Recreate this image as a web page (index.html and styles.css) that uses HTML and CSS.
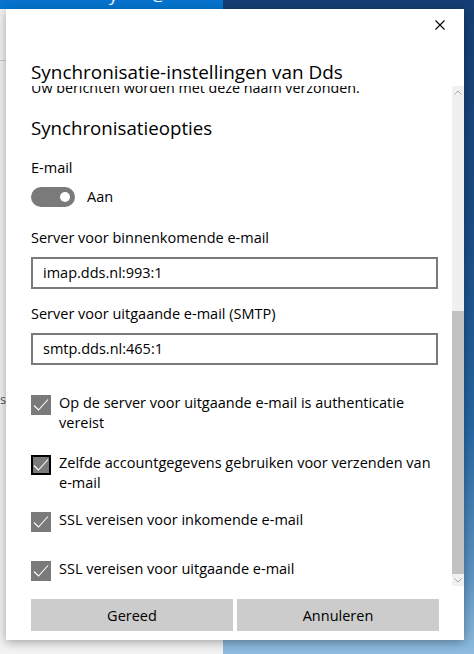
FILE: index.html
```html
<!DOCTYPE html>
<html lang="nl">
<head>
<meta charset="utf-8">
<title>Synchronisatie-instellingen</title>
<link rel="stylesheet" href="styles.css">
</head>
<body>
<div class="bg">
  <div class="bg-left">
    <div class="bg-bar"><span class="bar-text">y</span><span class="bar-text at">@</span></div>
    <div class="bg-app">
      <div class="app-line"></div>
      <span class="app-s">s</span>
    </div>
  </div>
  <div class="bg-right"></div>
</div>

<div class="dialog">
  <header class="dlg-head">
    <button class="close" aria-label="Sluiten">
      <svg width="10" height="10" viewBox="0 0 10 10"><path d="M0.5 0.5 L9.5 9.5 M9.5 0.5 L0.5 9.5" stroke="#000" stroke-width="1.1" fill="none"/></svg>
    </button>
    <h1 class="title">Synchronisatie-instellingen van Dds</h1>
  </header>

  <div class="scroll">
    <div class="viewport">
      <div class="content">
        <p class="subtitle">Uw berichten worden met deze naam verzonden.</p>
        <h2 class="heading">Synchronisatieopties</h2>
        <div class="label email-label">E-mail</div>
        <div class="toggle-row">
          <span class="toggle"><span class="knob"></span></span>
          <span class="toggle-text">Aan</span>
        </div>
        <div class="label field-label first">Server voor binnenkomende e-mail</div>
        <div class="input">imap.dds.nl:993:1</div>
        <div class="label field-label second">Server voor uitgaande e-mail (SMTP)</div>
        <div class="input">smtp.dds.nl:465:1</div>

        <div class="check c1">
          <span class="box"><svg width="20" height="20" viewBox="0 0 20 20"><path d="M3 10.5 L7.5 15 L17 4.5" stroke="#fff" stroke-width="1.1" fill="none"/></svg></span>
          <span class="check-text">Op de server voor uitgaande e-mail is authenticatie vereist</span>
        </div>
        <div class="check c2">
          <span class="box focus"><svg width="16" height="16" viewBox="2 2 16 16"><path d="M3 10.5 L7.5 15 L17 4.5" stroke="#fff" stroke-width="1.1" fill="none"/></svg></span>
          <span class="check-text">Zelfde accountgegevens gebruiken voor verzenden van e-mail</span>
        </div>
        <div class="check c3">
          <span class="box"><svg width="20" height="20" viewBox="0 0 20 20"><path d="M3 10.5 L7.5 15 L17 4.5" stroke="#fff" stroke-width="1.1" fill="none"/></svg></span>
          <span class="check-text">SSL vereisen voor inkomende e-mail</span>
        </div>
        <div class="check c4">
          <span class="box"><svg width="20" height="20" viewBox="0 0 20 20"><path d="M3 10.5 L7.5 15 L17 4.5" stroke="#fff" stroke-width="1.1" fill="none"/></svg></span>
          <span class="check-text">SSL vereisen voor uitgaande e-mail</span>
        </div>
      </div>
    </div>
    <div class="scrollbar">
      <span class="arrow">
        <svg width="8" height="5" viewBox="0 0 8 5"><path d="M0.5 4.5 L4 1 L7.5 4.5" stroke="#a6a6a6" stroke-width="1" fill="none"/></svg>
      </span>
      <div class="track"><div class="thumb"></div></div>
      <span class="arrow">
        <svg width="8" height="5" viewBox="0 0 8 5"><path d="M0.5 0.5 L4 4 L7.5 0.5" stroke="#a6a6a6" stroke-width="1" fill="none"/></svg>
      </span>
    </div>
  </div>

  <div class="buttons">
    <button class="btn">Gereed</button>
    <button class="btn">Annuleren</button>
  </div>
</div>
</body>
</html>
```

FILE: styles.css
```css
* { box-sizing: border-box; }

html, body {
  margin: 0;
  padding: 0;
  width: 474px;
  height: 654px;
  overflow: hidden;
  font-family: "Open Sans", "Noto Sans", "Liberation Sans", sans-serif;
  color: #000;
}

.bg {
  display: grid;
  grid-template-columns: 223px 1fr;
  height: 654px;
}

.bg-left {
  display: flex;
  flex-direction: column;
}

.bg-bar {
  height: 9px;
  background: linear-gradient(#0a72cc, #0078d4);
  overflow: hidden;
  position: relative;
}

.bar-text {
  position: absolute;
  left: 109px;
  top: -17px;
  font-size: 17px;
  line-height: 23px;
  color: #fff;
}

.bar-text.at {
  left: 151px;
}

.bg-app {
  flex: 1;
  background: #f3f3f3;
  display: flex;
  flex-direction: column;
}

.app-line {
  margin-top: 51px;
  border-top: 1px solid #cfcfcf;
  width: 6px;
}

.app-s {
  margin-top: 330px;
  font-size: 13px;
  color: #555;
  line-height: 16px;
}

.bg-right {
  background: linear-gradient(180deg, #143e74 0%, #1a4c86 35%, #2466a2 65%, #5c93c4 88%, #8fbde0 100%);
}

.dialog {
  position: absolute;
  left: 6px;
  top: 9px;
  width: 458px;
  height: 631px;
  background: #fff;
  box-shadow: 0 2px 10px rgba(0, 0, 0, 0.35);
  display: flex;
  flex-direction: column;
}

.dlg-head {
  height: 77px;
  flex: none;
  position: relative;
  padding: 50px 0 0 25px;
}

.close {
  position: absolute;
  left: 429px;
  top: 11px;
  width: 10px;
  height: 10px;
  padding: 0;
  border: 0;
  background: none;
  display: block;
}

.close svg { display: block; }

.title {
  margin: 0;
  font-size: 18.9px;
  font-weight: 400;
  line-height: 26px;
}

.scroll {
  flex: 1;
  display: flex;
  min-height: 0;
}

.viewport {
  flex: 1;
  overflow: hidden;
}

.content {
  margin-top: -8px;
  padding: 0 14px 0 25px;
  font-size: 14.5px;
  line-height: 20px;
}

.subtitle {
  margin: 0;
  font-size: 14.3px;
}

.heading {
  margin: 16px 0 0;
  font-size: 18.7px;
  font-weight: 400;
  line-height: 28px;
}

.label { line-height: 20px; }

.email-label { margin-top: 16px; }

.toggle-row {
  margin-top: 9px;
  display: flex;
  align-items: center;
  gap: 12px;
  height: 20px;
}

.toggle {
  width: 44px;
  height: 20px;
  border-radius: 10px;
  background: #7a7a7a;
  display: flex;
  align-items: center;
  justify-content: flex-end;
  padding-right: 5px;
}

.knob {
  width: 10px;
  height: 10px;
  border-radius: 50%;
  background: #fff;
}

.field-label.first { margin-top: 21px; }
.field-label.second { margin-top: 15px; }

.input {
  margin-top: 9px;
  height: 32px;
  border: 2px solid #7a7a7a;
  padding: 0 10px;
  display: flex;
  align-items: center;
}

.check {
  display: flex;
  gap: 8px;
  align-items: flex-start;
}

.c1 { margin-top: 28px; }
.c2 { margin-top: 20px; }
.c3 { margin-top: 17px; }
.c4 { margin-top: 27px; }

.box {
  flex: none;
  width: 20px;
  height: 20px;
  margin-top: 2px;
  background: #7a7a7a;
  display: flex;
  align-items: center;
  justify-content: center;
}

.box svg { display: block; }

.box.focus {
  border: 2px solid #000;
}

.check-text {
  flex: 1;
}

.scrollbar {
  width: 12px;
  flex: none;
  background: #f0f0f0;
  display: flex;
  flex-direction: column;
  align-items: center;
}

.arrow {
  height: 12px;
  display: flex;
  align-items: center;
  justify-content: center;
}

.arrow svg { display: block; }

.track {
  flex: 1;
  width: 12px;
  display: flex;
  flex-direction: column;
  justify-content: flex-end;
}

.thumb {
  height: 263px;
  background: #c2c2c2;
}

.buttons {
  flex: none;
  display: flex;
  gap: 4px;
  padding: 13px 25px 9px;
}

.btn {
  width: 202px;
  height: 32px;
  border: 0;
  background: #cccccc;
  font-family: inherit;
  font-size: 14.5px;
  color: #000;
  padding: 0;
}
```
